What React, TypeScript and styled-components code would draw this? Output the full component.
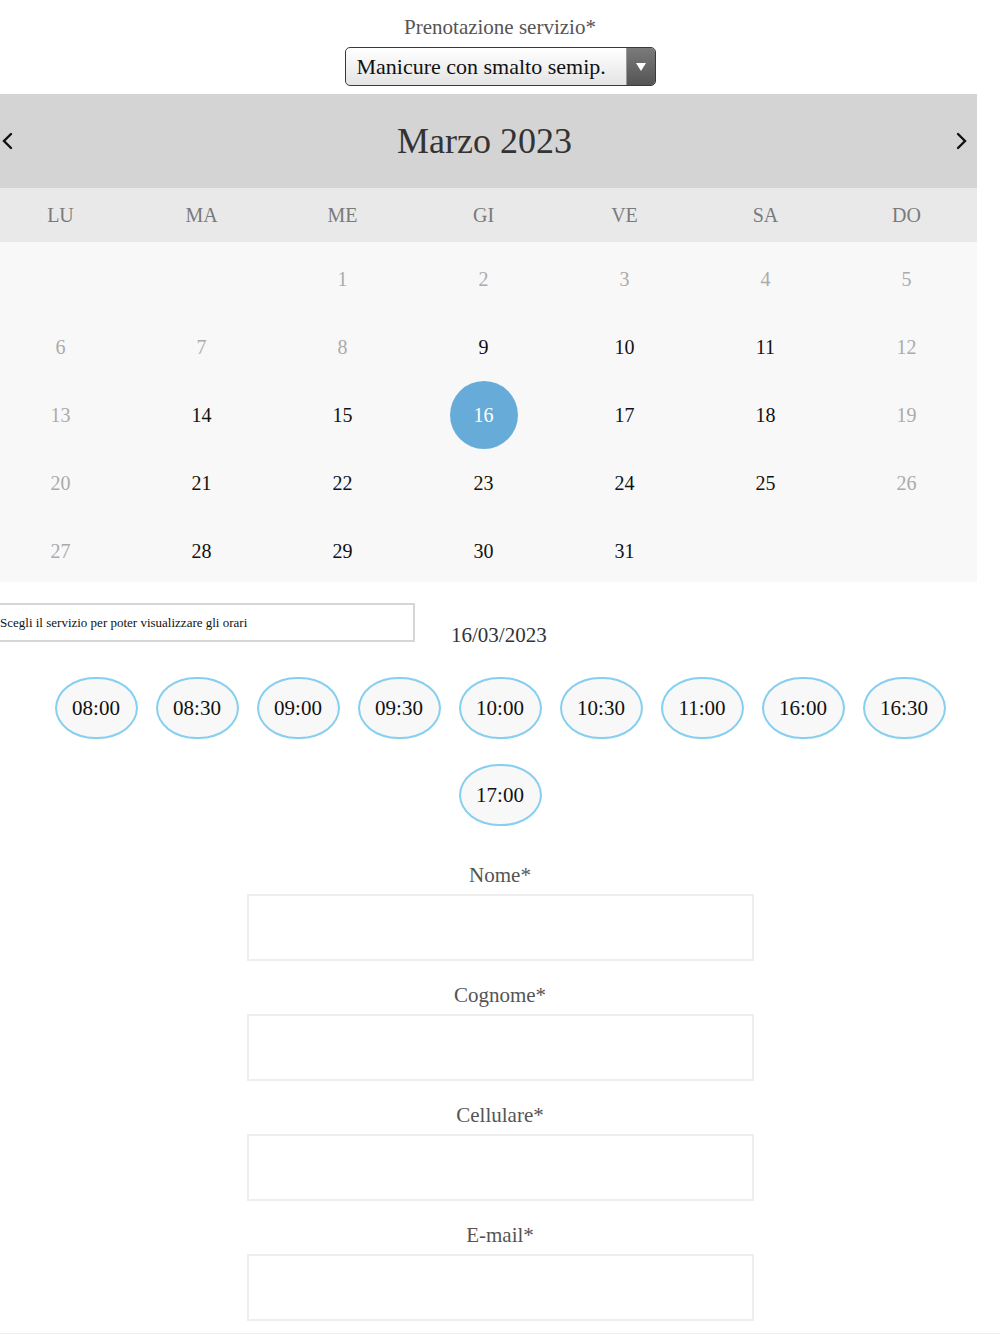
import React from "react";
import styled, { createGlobalStyle } from "styled-components";

const Global = createGlobalStyle`
  html, body { margin: 0; padding: 0; background: #ffffff; }
  body { font-family: "Liberation Serif", "Times New Roman", serif; overflow-x: hidden; }
  * { box-sizing: border-box; }
`;

const Page = styled.div`
  width: 1000px;
  padding-top: 14px;
  display: flex;
  flex-direction: column;
  align-items: center;
`;

const FieldLabel = styled.div`
  font-size: 21px;
  line-height: 26px;
  color: #555;
  text-align: center;
`;

const Select = styled.div`
  margin-top: 7px;
  width: 311px;
  height: 39px;
  border: 1px solid #3a3a3a;
  border-radius: 5px;
  display: flex;
  overflow: hidden;
  background: linear-gradient(#ffffff, #e4e4e4);
`;

const SelectText = styled.div`
  flex: 1;
  font-size: 22px;
  line-height: 37px;
  color: #111;
  padding-left: 11px;
  white-space: nowrap;
  border-right: 1px solid #999;
`;

const SelectArrow = styled.div`
  width: 28px;
  display: flex;
  align-items: center;
  justify-content: center;
  background: linear-gradient(#7a7a7a, #555555);
`;

const Calendar = styled.div`
  margin-top: 8px;
  width: 987px;
  align-self: flex-start;
  margin-left: -10px;
`;

const CalHeader = styled.div`
  height: 94px;
  background: #d4d4d4;
  display: flex;
  align-items: center;
  justify-content: space-between;
  padding: 0 8px 0 10px;
`;

const NavBtn = styled.div`
  width: 14px;
  display: flex;
  align-items: center;
  justify-content: center;
`;

const Title = styled.div`
  font-size: 36px;
  color: #333;
`;

const Grid = styled.div<{ $bg: string; $row: number }>`
  display: grid;
  grid-template-columns: repeat(7, 141px);
  grid-auto-rows: ${(p) => p.$row}px;
  background: ${(p) => p.$bg};
`;

const WeekDay = styled.div`
  display: flex;
  align-items: center;
  justify-content: center;
  font-size: 20px;
  color: #7a7a7a;
`;

const Day = styled.div<{ $on: boolean; $sel: boolean }>`
  display: flex;
  align-items: center;
  justify-content: center;
  padding-top: 6px;
  font-size: 20px;
  color: ${(p) => (p.$sel ? "#fff" : p.$on ? "#111" : "#ababab")};
`;

const DayCircle = styled.span<{ $sel: boolean }>`
  width: 68px;
  height: 68px;
  border-radius: 50%;
  display: flex;
  align-items: center;
  justify-content: center;
  background: ${(p) => (p.$sel ? "#67acd9" : "transparent")};
`;

const InfoRow = styled.div`
  align-self: flex-start;
  margin-left: -12px;
  margin-top: 21px;
  display: flex;
  align-items: flex-start;
  gap: 36px;
`;

const InfoBox = styled.div`
  width: 427px;
  height: 39px;
  border: 2px solid #d6d6d6;
  font-size: 13px;
  line-height: 35px;
  padding-left: 10px;
  color: #111;
  white-space: nowrap;
`;

const DateText = styled.div`
  padding-top: 19px;
  font-size: 21px;
  line-height: 26px;
  color: #333;
`;

const Slots = styled.div`
  margin-top: 29px;
  width: 900px;
  display: flex;
  flex-wrap: wrap;
  justify-content: center;
  gap: 25px 18px;
`;

const Slot = styled.div`
  width: 83px;
  height: 62px;
  border: 2px solid #86cff0;
  border-radius: 40px / 31px;
  background: #f8f8f8;
  display: flex;
  align-items: center;
  justify-content: center;
  font-size: 21px;
  color: #111;
`;

const Form = styled.div`
  margin-top: 36px;
  width: 507px;
  display: flex;
  flex-direction: column;
`;

const Field = styled.div`
  display: flex;
  flex-direction: column;
  gap: 6px;
  margin-bottom: 21px;
  &:last-child { margin-bottom: 0; }
`;

const TextInput = styled.div`
  height: 67px;
  border: 2px solid #eeeeee;
  background: #fff;
`;

const Footer = styled.div`
  margin-top: 12px;
  width: 1000px;
  border-top: 1px solid #eeeeee;
  height: 10px;
`;

const days: (number | null)[] = [
  null, null, 1, 2, 3, 4, 5,
  6, 7, 8, 9, 10, 11, 12,
  13, 14, 15, 16, 17, 18, 19,
  20, 21, 22, 23, 24, 25, 26,
  27, 28, 29, 30, 31, null, null,
];
const available = new Set([9, 10, 11, 14, 15, 16, 17, 18, 21, 22, 23, 24, 25, 28, 29, 30, 31]);
const weekdays = ["LU", "MA", "ME", "GI", "VE", "SA", "DO"];
const slots = ["08:00", "08:30", "09:00", "09:30", "10:00", "10:30", "11:00", "16:00", "16:30", "17:00"];
const fields = ["Nome*", "Cognome*", "Cellulare*", "E-mail*"];

const Chevron = ({ dir }: { dir: "l" | "r" }) => (
  <svg width="12" height="20" viewBox="0 0 12 20">
    <polyline
      points={dir === "l" ? "10,3 3,10 10,17" : "2,3 9,10 2,17"}
      fill="none"
      stroke="#111"
      strokeWidth="2.4"
      strokeLinecap="round"
      strokeLinejoin="miter"
    />
  </svg>
);

export default function App() {
  return (
    <>
      <Global />
      <Page>
        <FieldLabel>Prenotazione servizio*</FieldLabel>
        <Select>
          <SelectText>Manicure con smalto semip.</SelectText>
          <SelectArrow>
            <svg width="10" height="8" viewBox="0 0 10 8">
              <polygon points="0,0 10,0 5,8" fill="#fff" />
            </svg>
          </SelectArrow>
        </Select>
        <Calendar>
          <CalHeader>
            <NavBtn><Chevron dir="l" /></NavBtn>
            <Title>Marzo 2023</Title>
            <NavBtn><Chevron dir="r" /></NavBtn>
          </CalHeader>
          <Grid $bg="#e9e9e9" $row={54}>
            {weekdays.map((w) => (
              <WeekDay key={w}>{w}</WeekDay>
            ))}
          </Grid>
          <Grid $bg="#f8f8f8" $row={68}>
            {days.map((d, i) => (
              <Day key={i} $on={d !== null && available.has(d)} $sel={d === 16}>
                {d !== null && <DayCircle $sel={d === 16}>{d}</DayCircle>}
              </Day>
            ))}
          </Grid>
        </Calendar>
        <InfoRow>
          <InfoBox>Scegli il servizio per poter visualizzare gli orari</InfoBox>
          <DateText>16/03/2023</DateText>
        </InfoRow>
        <Slots>
          {slots.map((s) => (
            <Slot key={s}>{s}</Slot>
          ))}
        </Slots>
        <Form>
          {fields.map((f) => (
            <Field key={f}>
              <FieldLabel>{f}</FieldLabel>
              <TextInput />
            </Field>
          ))}
        </Form>
        <Footer />
      </Page>
    </>
  );
}
